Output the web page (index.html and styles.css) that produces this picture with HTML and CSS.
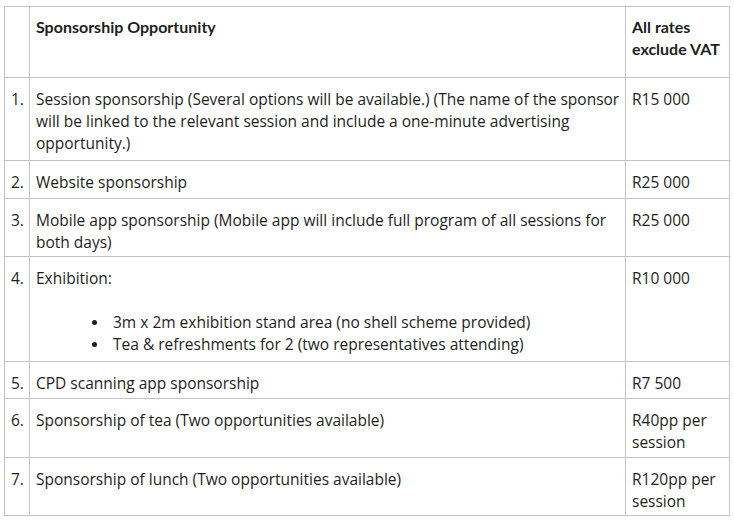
FILE: index.html
```html
<!DOCTYPE html>
<html>
<head>
<meta charset="utf-8">
<link rel="stylesheet" href="styles.css">
</head>
<body>
<table class="rates">
  <colgroup>
    <col class="c-num">
    <col class="c-desc">
    <col class="c-rate">
  </colgroup>
  <tr class="head">
    <td></td>
    <td><b>Sponsorship Opportunity</b></td>
    <td><b>All rates exclude VAT</b></td>
  </tr>
  <tr class="r1">
    <td class="num">1.</td>
    <td>Session sponsorship (Several options will be available.) (The name of the sponsor will be linked to the relevant session and include a one-minute advertising opportunity.)</td>
    <td>R15 000</td>
  </tr>
  <tr class="r2">
    <td class="num">2.</td>
    <td>Website sponsorship</td>
    <td>R25 000</td>
  </tr>
  <tr class="r3">
    <td class="num">3.</td>
    <td>Mobile app sponsorship (Mobile app will include full program of all sessions for both days)</td>
    <td>R25 000</td>
  </tr>
  <tr class="r4">
    <td class="num">4.</td>
    <td>
      <div class="para">Exhibition:</div>
      <ul class="bullets">
        <li>3m x 2m exhibition stand area (no shell scheme provided)</li>
        <li>Tea &amp; refreshments for 2 (two representatives attending)</li>
      </ul>
    </td>
    <td>R10 000</td>
  </tr>
  <tr class="r5">
    <td class="num">5.</td>
    <td>CPD scanning app sponsorship</td>
    <td>R7 500</td>
  </tr>
  <tr class="r6">
    <td class="num">6.</td>
    <td>Sponsorship of tea (Two opportunities available)</td>
    <td>R40pp per session</td>
  </tr>
  <tr class="r7">
    <td class="num">7.</td>
    <td>Sponsorship of lunch (Two opportunities available)</td>
    <td>R120pp per session</td>
  </tr>
</table>
</body>
</html>
```
FILE: styles.css
```css
html, body {
  margin: 0;
  background: #ffffff;
}
body {
  padding: 6px 0 0 4px;
  font-family: "Open Sans", Lato, sans-serif;
  font-size: 15.5px;
  line-height: 22px;
  color: #1e1e1e;
}
.rates {
  border-collapse: collapse;
  table-layout: fixed;
  width: 725px;
}
.c-num { width: 25px; }
.c-desc { width: 596px; }
.c-rate { width: 104px; }
.rates td {
  border: 1px solid #c4c4c4;
  vertical-align: top;
  padding: 10px 2px 5px 6px;
}
.rates td.num {
  padding-left: 6px;
  padding-right: 0;
}
.rates b {
  font-family: Lato, "Open Sans", sans-serif;
  font-size: 16px;
  font-weight: 700;
}
.head td {
  height: 55px;
  padding-top: 9px;
  padding-bottom: 6px;
}
.para {
  margin-bottom: 22px;
}
.bullets {
  margin: 0;
  padding-left: 77px;
  list-style: none;
}
.bullets li {
  position: relative;
}
.bullets li::before {
  content: "";
  position: absolute;
  left: -21px;
  top: 9px;
  width: 5px;
  height: 5px;
  border-radius: 50%;
  background: #1e1e1e;
}
.r1 td { padding-bottom: 6px; }
.r3 td { padding-bottom: 3px; }
.r4 td { padding-bottom: 6px; }
.r5 td { padding-bottom: 4px; }
.r6 td { padding-bottom: 4px; }
.r7 td { padding-bottom: 3px; }
```
